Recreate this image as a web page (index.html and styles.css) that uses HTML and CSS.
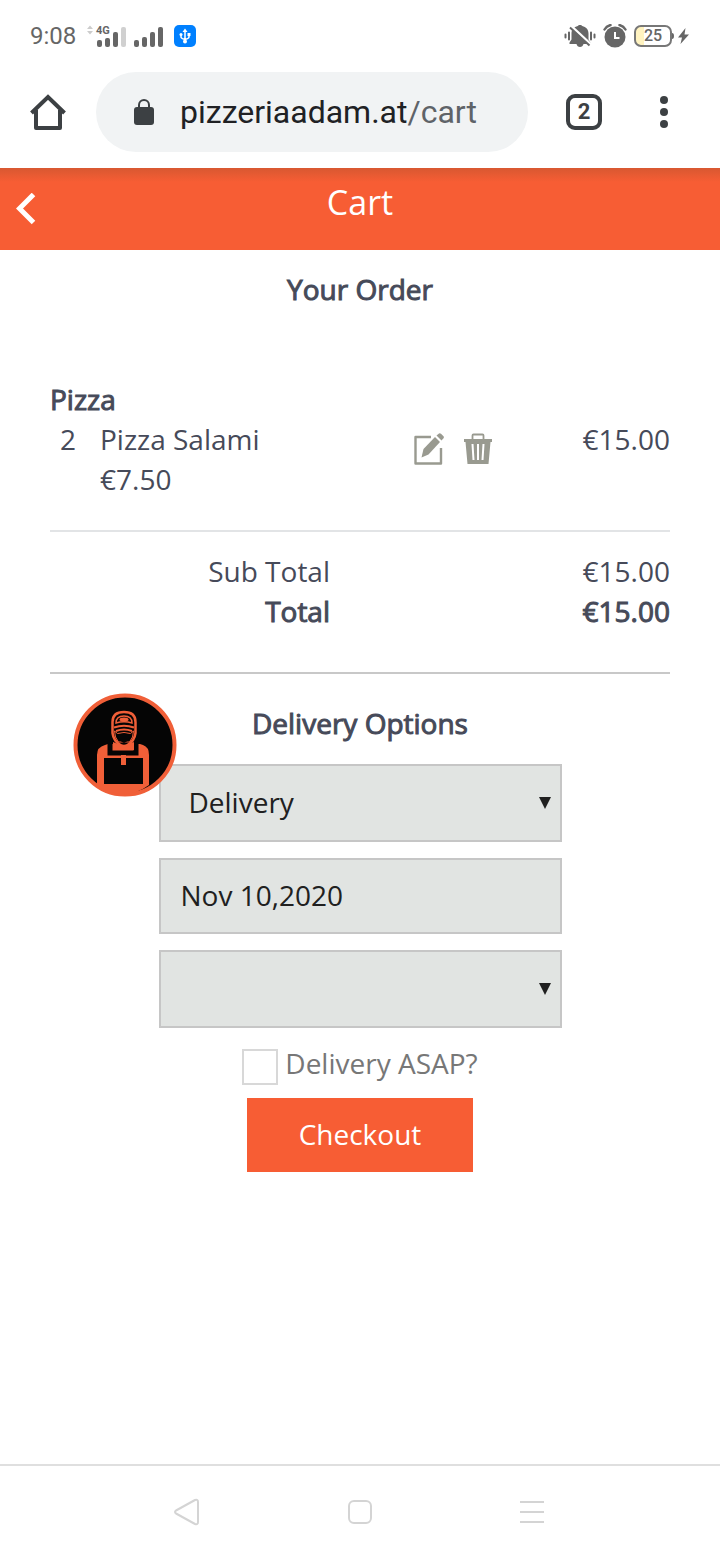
FILE: index.html
```html
<!DOCTYPE html>
<html lang="en">
<head>
    <meta charset="UTF-8">
    <meta name="viewport" content="width=device-width, initial-scale=1.0">
    <link rel="stylesheet" href="styles.css">
    <title>Cart</title>
</head>
<body>

    <!--PHONE STATUS BAR-->
    <div class="status-bar">
        <div class="status-left">
            <span class="time">9:08</span>
            <svg class="signal" width="110" height="24" viewBox="0 0 110 24" fill="#666">
                <path d="M0 5l3-3.500 3 3.500zM0 7h6l-3 3.500z" fill="#ccc"/>
                <text x="9" y="10" class="network">4G</text>
                <rect x="10" y="16" width="5" height="7" rx="2"/>
                <rect x="18" y="14" width="5" height="9" rx="2"/>
                <rect x="26" y="8" width="5" height="15" rx="2"/>
                <rect x="34" y="3" width="5" height="20" rx="2" fill="#d0d0d0"/>
                <rect x="47" y="16" width="5" height="7" rx="2"/>
                <rect x="55" y="13" width="5" height="10" rx="2"/>
                <rect x="63" y="8" width="5" height="15" rx="2"/>
                <rect x="71" y="3" width="5" height="20" rx="2"/>
                <rect x="87" y="1" width="22" height="22" rx="5" fill="#0080ff"/>
                <g fill="none" stroke="#fff" stroke-width="1.500">
                    <path d="M98 7v10M94 10v3q0 1.500 4 2.500M102 10v3q0 1.500-4 2.500"/>
                </g>
                <path d="M98 4.500l2.500 3.500h-5z" fill="#fff"/>
                <circle cx="98" cy="17.500" r="2" fill="#fff"/>
                <circle cx="94" cy="10.500" r="1.500" fill="#fff"/>
                <rect x="100.500" y="9" width="3" height="3" fill="#fff"/>
            </svg>
        </div>
        <div class="status-right">
            <svg width="32" height="24" viewBox="0 0 32 24" fill="#666">
                <path d="M16 1c1.200 0 2 .5 2.200 1 3.800.8 6.300 3.500 6.300 7.500v6l2 3v1.500h-21v-1.500l2-3v-6c0-4 2.500-6.700 6.300-7.500.2-.5 1-1 2.200-1zM12.500 20h7c-.5 2-1.700 3-3.500 3s-3-1-3.500-3z"/>
                <path d="M6 1l21 19.500" stroke="#fff" stroke-width="2.500"/>
                <path d="M6 3.500l19.500 18" stroke="#666" stroke-width="2"/>
                <path d="M1.500 10.500v3M5 8.500v7M27 8.500v7M30.500 10.500v3" stroke="#666" stroke-width="2" stroke-linecap="round"/>
            </svg>
            <svg width="24" height="24" viewBox="0 0 24 24" fill="none" stroke="#666">
                <circle cx="12" cy="13" r="10.500" fill="#666" stroke="none"/>
                <path d="M1.500 5.500Q3.500 2 7.500 1M22.500 5.500Q20.500 2 16.500 1" stroke-width="2.400" stroke-linecap="round"/>
                <path d="M12 8v6h4.500" stroke="#fff" stroke-width="2"/>
            </svg>
            <div class="power">
                <span class="battery">25</span>
                <svg width="18" height="18" viewBox="0 0 18 18" fill="#666">
                    <path d="M0 6q2 0 2 3t-2 3z"/>
                    <path d="M13.500 1L6 10.500h4L8.500 17 17 7.500h-4.500z"/>
                </svg>
            </div>
        </div>
    </div>

    <!--BROWSER TOOLBAR-->
    <div class="toolbar">
        <button class="icon-button" aria-label="Home">
            <svg width="36" height="36" viewBox="0 0 36 36" fill="none" stroke="#3c4043" stroke-width="4" stroke-linejoin="round">
                <path d="M1.500 19L18 3l16.500 16" stroke-linejoin="miter"/>
                <path d="M6 16v18h24V16"/>
            </svg>
        </button>
        <button class="address">
            <svg width="20" height="26" viewBox="0 0 20 26">
                <rect x="0" y="8" width="20" height="18" rx="3" fill="#3c4043"/>
                <path d="M5 9V6a5 5 0 0 1 10 0v3" fill="none" stroke="#3c4043" stroke-width="2"/>
            </svg>
            <span>pizzeriaadam.at<span class="path">/cart</span></span>
        </button>
        <button class="tabs" aria-label="Open tabs">2</button>
        <button class="icon-button menu" aria-label="Menu">
            <svg width="8" height="32" viewBox="0 0 8 32" fill="#3c4043">
                <circle cx="4" cy="4" r="4"/>
                <circle cx="4" cy="16" r="4"/>
                <circle cx="4" cy="28" r="4"/>
            </svg>
        </button>
    </div>

    <!--PAGE HEADER-->
    <header class="header">
        <a href="#" class="back" aria-label="Back">
            <svg width="20" height="32" viewBox="0 0 20 32" fill="none" stroke="#fff" stroke-width="5">
                <path d="M17.500 1.500L3.500 15.500l14 14"/>
            </svg>
        </a>
        <h1>Cart</h1>
    </header>

    <main class="cart">
        <h2>Your Order</h2>

        <!--ORDER ITEMS-->
        <table class="items">
            <tr>
                <th colspan="4">Pizza</th>
            </tr>
            <tr>
                <td class="quantity">2</td>
                <td>Pizza Salami<br>€7.50</td>
                <td class="actions">
                    <div class="action-buttons">
                        <button class="icon-button" aria-label="Edit">
                            <svg width="30" height="32" viewBox="0 0 30 32" fill="#999a90">
                                <path d="M17 4H1.500v26.500h25.500V15" fill="none" stroke="#999a90" stroke-width="2.400" stroke-linejoin="round"/>
                                <path d="M7.500 24.500l2-8.500L21 4l5 5L14.500 21.500z"/>
                                <path d="M22.500 2.500L25 .500q1-.5 2 .3l2.500 2.500q.8 1 0 2L27.500 7.500z"/>
                            </svg>
                        </button>
                        <button class="icon-button" aria-label="Delete">
                            <svg width="28" height="32" viewBox="0 0 28 32" fill="#999a90">
                                <path d="M8.500 6V2.500q0-1 1-1h9q1 0 1 1V6" fill="none" stroke="#999a90" stroke-width="1.800"/>
                                <path d="M0 6h28v3h-1.500L24.500 31h-21L1.500 9H0z"/>
                                <path d="M8.500 11l1 16M14 11v16M19.500 11l-1 16" stroke="#fff" stroke-width="2"/>
                            </svg>
                        </button>
                    </div>
                </td>
                <td class="price">€15.00</td>
            </tr>
        </table>

        <table class="totals">
            <tr>
                <td class="total-name">Sub Total</td>
                <td class="price">€15.00</td>
            </tr>
            <tr class="total">
                <td class="total-name">Total</td>
                <td class="price">€15.00</td>
            </tr>
        </table>

        <!--DELIVERY FORM-->
        <form class="delivery">
            <svg class="courier" width="104" height="104" viewBox="0 0 104 104">
                <circle cx="52" cy="52" r="49.500" fill="#050505" stroke="#f05f38" stroke-width="4"/>
                <!--body and arms-->
                <path d="M24 92V62q0-8 8-10l3-1h32l3 1q6 2 6 10v30q-12 9-26 9t-26-9z" fill="#f05f38"/>
                <!--apron straps-->
                <path d="M37 49v11h26V49" fill="none" stroke="#050505" stroke-width="5"/>
                <path d="M40 49q10 5 21 0v8H40z" fill="#f05f38"/>
                <!--box-->
                <rect x="31" y="65" width="39" height="26" fill="#050505"/>
                <rect x="48" y="62" width="5" height="10" fill="#f05f38"/>
                <!--head-->
                <path d="M39.500 29q0-10 11.500-10t11.500 10v11q-1 8-8 12-3.500 2-7 0-7-4-8-12z" fill="#050505" stroke="#f05f38" stroke-width="2.500"/>
                <path d="M43 30q0-7 8-7t8 7q-8-2.500-16 0z" fill="none" stroke="#f05f38" stroke-width="1.500"/>
                <ellipse cx="51" cy="26.500" rx="4.500" ry="2" fill="#f05f38"/>
                <path d="M41 34.500q10-3.500 20 0M43 38q8-3 16 0" fill="none" stroke="#f05f38" stroke-width="2"/>
                <path d="M41.500 38l3 2.500q6.500-2 13 0l3-2.500-1 6-3 5h-11l-3-5z" fill="none" stroke="#f05f38" stroke-width="1"/>
                <path d="M44 42q7-3 14 0-1 5-7 8-6-3-7-8z" fill="#050505"/>
            </svg>
            <h2>Delivery Options</h2>
            <div class="select-box">
                <select class="field" aria-label="Delivery type">
                    <option>Delivery</option>
                    <option>Pickup</option>
                </select>
            </div>
            <input class="field date" type="text" value="Nov 10,2020" aria-label="Delivery date">
            <div class="select-box">
                <select class="field" aria-label="Delivery time">
                    <option></option>
                </select>
            </div>
            <div class="asap">
                <input type="checkbox" id="asap">
                <label for="asap">Delivery ASAP?</label>
            </div>
            <button type="button" class="checkout">Checkout</button>
        </form>
    </main>

    <!--PHONE NAVIGATION-->
    <nav class="phone-nav">
        <button class="icon-button" aria-label="Back">
            <svg width="26" height="28" viewBox="0 0 26 28" fill="none" stroke="#d4d4d4" stroke-width="2" stroke-linejoin="round">
                <path d="M2 12.500L21 2q3-1 3 2v20q0 3-3 2L2 15.500q-2-1.500 0-3z"/>
            </svg>
        </button>
        <button class="icon-button" aria-label="Home">
            <svg width="26" height="26" viewBox="0 0 26 26" fill="none" stroke="#d4d4d4" stroke-width="2">
                <rect x="2" y="2" width="22" height="22" rx="5"/>
            </svg>
        </button>
        <button class="icon-button" aria-label="Recent apps">
            <svg width="26" height="24" viewBox="0 0 26 24" stroke="#d4d4d4" stroke-width="2">
                <path d="M0 2h24M0 12h24M0 22h24"/>
            </svg>
        </button>
    </nav>

</body>
</html>
```
FILE: styles.css
```css
*{
    box-sizing: border-box;
}
body{
    margin: 0;
    min-height: 100vh;
    display: flex;
    flex-direction: column;
    font-family: "Open Sans", sans-serif;
    font-size: 28px;
    line-height: 40px;
    color: #464a59;
    background-color: white;
}
button{
    font-family: inherit;
    border: none;
    cursor: pointer;
}
svg{
    display: block;
}
.icon-button{
    padding: 0;
    background: none;
}

/* status bar */
.status-bar{
    height: 72px;
    padding: 0 30px;
    display: flex;
    justify-content: space-between;
    align-items: center;
    font-family: Roboto, sans-serif;
    color: #666;
}
.status-left, .status-right, .power{
    display: flex;
    align-items: center;
}
.status-left{
    gap: 11px;
}
.status-right{
    gap: 7px;
}
.time{
    font-size: 24px;
}
.network{
    font-size: 11px;
    font-weight: bold;
}
.battery{
    width: 38px;
    height: 22px;
    border: 2px solid #777;
    border-radius: 7px;
    font-size: 16px;
    font-weight: 500;
    line-height: 18px;
    text-align: center;
    background: linear-gradient(to right, #fff3c0 8px, white 8px);
}

/* browser toolbar */
.toolbar{
    padding: 0 52px 16px 30px;
    display: flex;
    align-items: center;
    font-family: Roboto, sans-serif;
}
.address{
    flex: 1;
    height: 80px;
    margin: 0 38px 0 30px;
    padding: 0 38px;
    display: flex;
    align-items: center;
    gap: 26px;
    font-size: 32px;
    color: #202124;
    background-color: #f1f3f4;
    border-radius: 40px;
}
.path{
    color: #5f6368;
}
.tabs{
    width: 36px;
    height: 36px;
    padding: 0;
    border: 4px solid #3c4043;
    border-radius: 9px;
    font-size: 22px;
    font-weight: bold;
    line-height: 28px;
    color: #3c4043;
    background: none;
}
.menu{
    margin-left: 58px;
}

/* page header */
.header{
    height: 82px;
    padding: 0 16px;
    display: grid;
    grid-template-columns: 20px 1fr 20px;
    align-items: center;
    color: white;
    background: linear-gradient(#d85831, #f75d34 14px);
}
.header h1{
    margin: 0;
    padding-bottom: 14px;
    font-size: 34px;
    font-weight: normal;
    text-align: center;
}

/* cart */
.cart{
    flex: 1;
    padding: 19px 50px;
}
h2, th, .total{
    font-size: 28px;
    font-weight: normal;
    -webkit-text-stroke: 1px #464a59;
}
h2{
    margin: 0;
    text-align: center;
}
table{
    width: 100%;
    border-collapse: collapse;
}
th, td{
    padding: 0;
    text-align: left;
    vertical-align: top;
}
.items{
    margin-top: 70px;
}
.items td{
    padding-bottom: 31px;
}
.items .quantity{
    width: 50px;
    padding-left: 10px;
}
.items .actions{
    width: 106px;
    padding-top: 14px;
}
.action-buttons{
    display: flex;
    gap: 20px;
}
.items .price{
    width: 150px;
}
td.price, .total-name{
    text-align: right;
}
.totals{
    border-top: 2px solid #e2e4e6;
    border-bottom: 2px solid #c8c8c8;
    border-collapse: separate;
    border-spacing: 0;
    padding: 19px 0 41px;
}
.total-name{
    width: 280px;
}

/* delivery */
.delivery{
    position: relative;
    padding-top: 29px;
    display: flex;
    flex-direction: column;
    align-items: center;
}
.delivery h2{
    margin-bottom: 21px;
}
.courier{
    position: absolute;
    top: 19px;
    left: 23px;
    z-index: 1;
}
.select-box, .date{
    width: 65%;
}
.select-box{
    position: relative;
}
.select-box::after{
    content: "";
    position: absolute;
    top: 33px;
    right: 11px;
    border: 6px solid transparent;
    border-top: 12px solid #202020;
    border-bottom: none;
    pointer-events: none;
}
.field{
    display: block;
    height: 78px;
    border: 2px solid #c6c6c6;
    border-radius: 0;
    font-family: inherit;
    font-size: 28px;
    color: #202020;
    background-color: #e1e4e2;
}
select.field{
    appearance: none;
    width: 100%;
    padding: 0 28px 2px;
}
.date{
    height: 76px;
    margin: 16px 0;
    padding: 0 20px 2px;
}
.asap{
    margin: 15px 0 13px;
    display: flex;
    align-items: flex-end;
    gap: 7px;
    color: #777;
}
.asap label{
    padding-bottom: 2px;
}
.asap input{
    appearance: none;
    width: 36px;
    height: 36px;
    margin: 0;
    border: 2px solid #d8d8d8;
    background-color: white;
}
.checkout{
    padding: 16px 52px 18px;
    font-size: 28px;
    line-height: 40px;
    color: white;
    background-color: #f75d34;
}

/* phone navigation */
.phone-nav{
    height: 96px;
    padding: 0 174px 2px;
    display: flex;
    justify-content: space-between;
    align-items: center;
    border-top: 2px solid #dfdfdf;
}
```
